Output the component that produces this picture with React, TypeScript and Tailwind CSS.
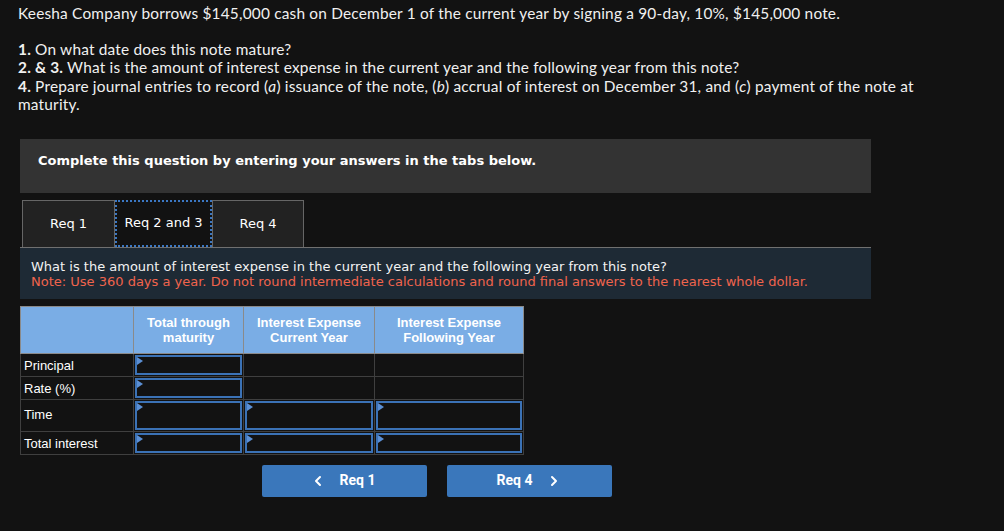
import { ChevronLeft, ChevronRight } from 'lucide-react';

const verdana = { fontFamily: '"DejaVu Sans", Verdana, sans-serif' };
const arial = { fontFamily: '"Liberation Sans", Arial, sans-serif' };

// Input cell with the small blue marker in its corner
function InputCell({ h }: { h: string }) {
  return (
    <td className="border border-[#3f3f3f] p-[1px]">
      <div className={`relative ${h} border-2 border-[#3b72b6] bg-[#121212]`}>
        <span className="absolute left-0 top-0 h-0 w-0 border-y-[4px] border-l-[6px] border-y-transparent border-l-[#5b8fd4]" />
      </div>
    </td>
  );
}

function EmptyCell() {
  return <td className="border border-[#3f3f3f]" />;
}

export default function App() {
  return (
    <div className="h-[531px] w-[1004px] overflow-hidden bg-[#121212] text-white">
      {/* Question text */}
      <div className="pl-[18px] pt-[4px] text-[15.4px] leading-[18.5px] tracking-[0.2px] text-[#f0f0f0]" style={{ fontFamily: 'Lato, "Open Sans", sans-serif' }}>
        <p>Keesha Company borrows $145,000 cash on December 1 of the current year by signing a 90-day, 10%, $145,000 note.</p>
        <p className="mt-[17px]">
          <b>1.</b> On what date does this note mature?
          <br />
          <b>2. &amp; 3.</b> What is the amount of interest expense in the current year and the following year from this note?
          <br />
          <b>4.</b> Prepare journal entries to record (<i>a</i>) issuance of the note, (<i>b</i>) accrual of interest on December 31, and (<i>c</i>) payment of the note at
          <br />
          maturity.
        </p>
      </div>

      <div className="ml-[20px] mt-[25px] w-[851px]">
        {/* Instruction bar */}
        <div className="flex h-[54px] items-center bg-[#333333] pl-[18px] pb-[10px] text-[13px] font-bold" style={verdana}>
          Complete this question by entering your answers in the tabs below.
        </div>

        {/* Tabs */}
        <div className="mt-[7px] flex pl-[2px] text-[13px]" style={verdana}>
          <div className="flex h-[47px] w-[93px] items-center justify-center border border-b-0 border-[#666] bg-[#222]">Req 1</div>
          <div className="flex h-[47px] w-[97px] items-center justify-center border-2 border-dotted border-[#3b78c4] bg-[#121212]">Req 2 and 3</div>
          <div className="flex h-[47px] w-[92px] items-center justify-center border border-b-0 border-[#666] bg-[#222]">Req 4</div>
        </div>

        {/* Question panel */}
        <div className="h-[52px] border-t border-[#707070] bg-[#1e2a35] pl-[11px] pt-[11px] text-[13px] leading-[15px]" style={verdana}>
          <p className="text-[#f2f2f2]">What is the amount of interest expense in the current year and the following year from this note?</p>
          <p className="text-[#f0644d]">Note: Use 360 days a year. Do not round intermediate calculations and round final answers to the nearest whole dollar.</p>
        </div>

        {/* Answer table */}
        <table className="mt-[7px] w-[503px] table-fixed border-collapse text-[13px]" style={arial}>
          <colgroup>
            <col className="w-[113px]" />
            <col className="w-[110px]" />
            <col className="w-[131px]" />
            <col className="w-[149px]" />
          </colgroup>
          <thead>
            <tr className="h-[47px] bg-[#7aade5] align-top font-bold leading-[15px] text-white">
              <th className="border border-[#8a8a8a]" />
              <th className="border border-[#8a8a8a] pt-[8px] font-bold">Total through<br />maturity</th>
              <th className="border border-[#8a8a8a] pt-[8px] font-bold">Interest Expense<br />Current Year</th>
              <th className="border border-[#8a8a8a] pt-[8px] font-bold">Interest Expense<br />Following Year</th>
            </tr>
          </thead>
          <tbody>
            <tr className="h-[23px]">
              <td className="border border-[#3f3f3f] pl-[3px] pt-[2px]">Principal</td>
              <InputCell h="h-[20px]" />
              <EmptyCell />
              <EmptyCell />
            </tr>
            <tr className="h-[23px]">
              <td className="border border-[#3f3f3f] pl-[3px] pt-[2px]">Rate (%)</td>
              <InputCell h="h-[20px]" />
              <EmptyCell />
              <EmptyCell />
            </tr>
            <tr className="h-[32px]">
              <td className="border border-[#3f3f3f] pl-[3px]">Time</td>
              <InputCell h="h-[29px]" />
              <InputCell h="h-[29px]" />
              <InputCell h="h-[29px]" />
            </tr>
            <tr className="h-[23px]">
              <td className="border border-[#3f3f3f] pl-[3px] pt-[2px]">Total interest</td>
              <InputCell h="h-[20px]" />
              <InputCell h="h-[20px]" />
              <InputCell h="h-[20px]" />
            </tr>
          </tbody>
        </table>

        {/* Navigation */}
        <div className="ml-[242px] mt-[10px] flex gap-[20px] text-[14px] font-bold" style={{ fontFamily: 'Roboto, sans-serif' }}>
          <button className="flex h-[32px] w-[165px] items-center justify-center gap-[14px] rounded-[2px] bg-[#3a77bb] pr-[4px] text-white">
            <ChevronLeft size={16} strokeWidth={3} />
            <span>Req 1</span>
          </button>
          <button className="flex h-[32px] w-[165px] items-center justify-center gap-[14px] rounded-[2px] bg-[#3a77bb] text-white">
            <span>Req 4</span>
            <ChevronRight size={16} strokeWidth={3} />
          </button>
        </div>
      </div>
    </div>
  );
}
